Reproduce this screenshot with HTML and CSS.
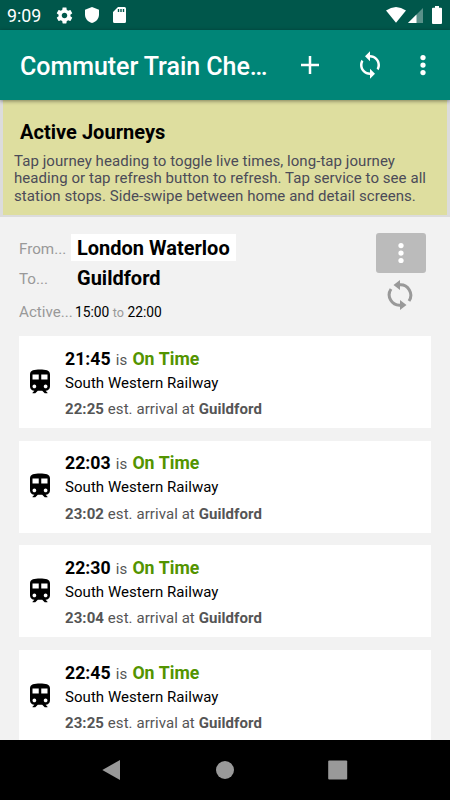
FILE: index.html
```html
<!DOCTYPE html>
<html lang="en">
<head>
<meta charset="utf-8">
<title>Commuter Train Checker</title>
<link rel="stylesheet" href="styles.css">
</head>
<body>
<svg class="defs" width="0" height="0">
  <symbol id="sync" viewBox="0 0 24 24"><path d="M12 4V1L8 5l4 4V6c3.31 0 6 2.69 6 6 0 1.01-.25 1.97-.7 2.8l1.46 1.46C19.54 15.03 20 13.57 20 12c0-4.42-3.58-8-8-8zm0 14c-3.31 0-6-2.69-6-6 0-1.01.25-1.97.7-2.8L5.24 7.74C4.46 8.97 4 10.43 4 12c0 4.42 3.58 8 8 8v3l4-4-4-4v3z"/></symbol>
  <symbol id="more" viewBox="0 0 24 24"><circle cx="12" cy="6" r="2.1"/><circle cx="12" cy="12" r="2.1"/><circle cx="12" cy="18" r="2.1"/></symbol>
  <symbol id="train" viewBox="0 0 24 24"><path d="M12 2c-4.42 0-8 .5-8 4v9.5C4 17.43 5.57 19 7.5 19L6 20.5v.5h2.23l2-2h3.54l2 2H18v-.5L16.5 19c1.93 0 3.5-1.57 3.5-3.5V6c0-3.5-3.58-4-8-4zM7.5 17c-.83 0-1.5-.67-1.5-1.5S6.67 14 7.5 14s1.5.67 1.5 1.5S8.33 17 7.5 17zm3.5-7H6V6h5v4zm2 0V6h5v4h-5zm3.5 7c-.83 0-1.5-.67-1.5-1.5s.67-1.5 1.5-1.5 1.5.67 1.5 1.5-.67 1.5-1.5 1.5z"/></symbol>
</svg>
<div class="screen">
  <div class="status">
    <span class="clock">9:09</span>
    <svg class="gear" width="19" height="19" viewBox="0 0 24 24"><path d="M19.43 12.98c.04-.32.07-.64.07-.98s-.03-.66-.07-.98l2.11-1.65c.19-.15.24-.42.12-.64l-2-3.46c-.12-.22-.39-.3-.61-.22l-2.49 1c-.52-.4-1.08-.73-1.69-.98l-.38-2.65C14.46 2.18 14.25 2 14 2h-4c-.25 0-.46.18-.49.42l-.38 2.65c-.61.25-1.17.59-1.69.98l-2.49-1c-.23-.09-.49 0-.61.22l-2 3.46c-.13.22-.07.49.12.64l2.11 1.65c-.04.32-.07.65-.07.98s.03.66.07.98l-2.11 1.65c-.19.15-.24.42-.12.64l2 3.46c.12.22.39.3.61.22l2.49-1c.52.4 1.08.73 1.69.98l.38 2.65c.03.24.24.42.49.42h4c.25 0 .46-.18.49-.42l.38-2.65c.61-.25 1.17-.59 1.69-.98l2.49 1c.23.09.49 0 .61-.22l2-3.46c.12-.22.07-.49-.12-.64l-2.11-1.65zM12 15.5c-1.93 0-3.5-1.57-3.5-3.5s1.57-3.5 3.5-3.5 3.5 1.57 3.5 3.5-1.57 3.5-3.5 3.5z"/></svg>
    <svg class="shield" width="14" height="16" viewBox="0 0 14 16"><path d="M7 0L0 2.700V7.500C0 11.500 3 15 7 16C11 15 14 11.500 14 7.500V2.700Z"/></svg>
    <svg class="sd" width="13" height="16" viewBox="0 0 13 16"><path fill-rule="evenodd" d="M5 0H11.500Q13 0 13 1.500V14.500Q13 16 11.500 16H1.500Q0 16 0 14.500V5ZM4.800 2V5H6.200V2ZM7.300 2V5H8.700V2ZM9.800 2V5H11.200V2Z"/></svg>
    <svg class="wifi" width="20" height="16" viewBox="0 0 20 16"><path d="M0 3.600Q10 -3.600 20 3.600L10 15.800Z"/></svg>
    <svg class="signal" width="15" height="15" viewBox="0 0 15 15"><path opacity=".35" d="M15 0V15H0Z"/><path d="M8.500 6.500V15H0Z"/></svg>
    <svg class="battery" width="10" height="18" viewBox="0 0 10 18"><path d="M3 0H7V1.700H9Q10 1.700 10 2.700V17Q10 18 9 18H1Q0 18 0 17V2.700Q0 1.700 1 1.700H3Z"/></svg>
  </div>
  <header class="bar">
    <h1>Commuter Train Che…</h1>
    <svg class="action" viewBox="0 0 24 24"><path d="M19.200 13h-6.200v6.200h-2V13H4.800v-2H11V4.800h2V11h6.200z"/></svg>
    <svg class="action"><use href="#sync"/></svg>
    <svg class="overflow"><use href="#more"/></svg>
  </header>
  <section class="notice">
    <h2>Active Journeys</h2>
    <p>Tap journey heading to toggle live times, long-tap journey<br>heading or tap refresh button to refresh. Tap service to see all<br>station stops. Side-swipe between home and detail screens.</p>
  </section>
  <section class="journey">
    <div class="route">
      <div class="line"><span class="label">From...</span><b class="station selected">London Waterloo</b></div>
      <div class="line"><span class="label">To...</span><b class="station">Guildford</b></div>
      <div class="line times"><span class="label">Active...</span><span class="period">15:00 <small>to</small> 22:00</span></div>
    </div>
    <div class="controls">
      <div class="menu"><svg><use href="#more"/></svg></div>
      <svg class="refresh" viewBox="0 0 26 30"><g fill="none" stroke="#999" stroke-width="3"><path d="M4 9A10.500 10.500 0 0 0 13.500 25.300"/><path d="M12.500 4.700A10.500 10.500 0 0 1 22 21"/></g><path fill="#999" d="M13 0V10L6.500 5ZM13 20V30L19.500 25Z"/></svg>
    </div>
  </section>
  <main class="services">
    <article class="card"><svg class="train"><use href="#train"/></svg><div><div class="due"><b>21:45</b> is <b class="ok">On Time</b></div><div class="operator">South Western Railway</div><div class="arrival"><b>22:25</b> est. arrival at <b>Guildford</b></div></div></article>
    <article class="card"><svg class="train"><use href="#train"/></svg><div><div class="due"><b>22:03</b> is <b class="ok">On Time</b></div><div class="operator">South Western Railway</div><div class="arrival"><b>23:02</b> est. arrival at <b>Guildford</b></div></div></article>
    <article class="card"><svg class="train"><use href="#train"/></svg><div><div class="due"><b>22:30</b> is <b class="ok">On Time</b></div><div class="operator">South Western Railway</div><div class="arrival"><b>23:04</b> est. arrival at <b>Guildford</b></div></div></article>
    <article class="card"><svg class="train"><use href="#train"/></svg><div><div class="due"><b>22:45</b> is <b class="ok">On Time</b></div><div class="operator">South Western Railway</div><div class="arrival"><b>23:25</b> est. arrival at <b>Guildford</b></div></div></article>
  </main>
  <nav class="nav">
    <svg viewBox="0 0 20 20"><path d="M.300 10L18 0V20Z"/></svg>
    <svg viewBox="0 0 20 20"><circle cx="10" cy="10" r="9"/></svg>
    <svg viewBox="0 0 20 20"><rect x=".200" y=".500" width="19" height="19" rx="1"/></svg>
  </nav>
</div>
</body>
</html>
```
FILE: styles.css
```css
* { box-sizing: border-box; }
body { margin: 0; font-family: Roboto, sans-serif; background: #f2f2f2; }
h1, h2, p { margin: 0; }
svg { display: block; flex: none; }
.defs { position: absolute; }
.screen { width: 450px; height: 800px; display: flex; flex-direction: column; overflow: hidden; }
.status { height: 30px; flex: none; display: flex; align-items: center; background: #00574b; color: #fff; fill: #fff; padding-right: 8px; }
.clock { width: 47px; margin-left: 7px; font-size: 17.800px; font-weight: 400; line-height: 30px; padding-top: 1px; }
.gear { margin-left: 1px; }
.shield { margin-left: 11px; }
.sd { margin-left: 14px; }
.wifi { margin-left: auto; }
.signal { margin-left: 2px; }
.battery { margin-left: 9px; }
.bar { height: 70px; flex: none; display: flex; align-items: center; background: #008577; color: #fff; fill: #fff; padding: 0 12px 0 20px; box-shadow: 0 1px 4px rgba(0,0,0,.45); position: relative; }
.bar h1 { width: 275px; font-size: 25px; font-weight: 500; line-height: 70px; white-space: nowrap; padding-top: 3px; letter-spacing: -.04px; }
.action { width: 30px; height: 30px; margin-right: 30px; }
.overflow { width: 30px; height: 30px; margin-left: -7.500px; }
.notice { height: 117px; flex: none; border: 3px solid #dcdcdc; border-top-width: 0; border-bottom-width: 2px; background: #dede9f; padding: 20px 0 0 11px; color: #4b4b58; }
.notice h2 { font-size: 20px; line-height: 24px; color: #000; padding-left: 6px; letter-spacing: .03px; }
.notice p { font-size: 15px; line-height: 17.600px; margin-top: 8.500px; white-space: nowrap; letter-spacing: .06px; }
.journey { height: 119px; flex: none; display: flex; justify-content: space-between; padding: 16px 24px 0 19px; }
.route { padding-top: 1px; }
.line { height: 28px; display: flex; align-items: center; }
.line + .line { margin-top: 2px; }
.line.times { margin-top: 5px; }
.label { width: 52px; font-size: 15.200px; color: #999; padding-top: 1px; }
.station { font-size: 20px; line-height: 26px; padding: 1px 6px 0; margin-top: -1px; white-space: nowrap; }
.selected { background: #fff; }
.times .label { width: 56px; }
.period { font-size: 13.800px; white-space: nowrap; padding-top: 1px; }
.period small { font-size: 12.600px; color: #999; }
.menu { width: 50px; height: 40px; border-radius: 3px; background: #bbb; display: flex; align-items: center; justify-content: center; fill: #fff; }
.menu svg { width: 30px; height: 30px; }
.refresh { width: 26px; height: 30px; margin: 7px 0 0 11px; }
.services { flex: 1; min-height: 0; overflow: hidden; display: flex; flex-direction: column; gap: 12.670px; padding: 0 19px; }
.card { height: 92px; flex: none; display: flex; background: #fff; padding: 10px 0 0 6px; }
.train { width: 30px; height: 30px; margin: 20.800px 10px 0 0; fill: #000; }
.due { font-size: 15px; line-height: 25px; color: #555; word-spacing: 1.500px; padding-top: .600px; margin-bottom: -.600px; }
.due b { font-size: 17.700px; color: #000; }
.due .ok { color: #539400; word-spacing: .300px; }
.operator { font-size: 15px; line-height: 22px; margin-top: -1px; letter-spacing: .05px; }
.arrival { font-size: 15px; line-height: 22px; margin-top: 4.500px; color: #555; letter-spacing: .07px; }
.nav { height: 60px; flex: none; background: #000; fill: #999; display: flex; align-items: center; justify-content: space-between; padding: 0 102px; }
.nav svg { width: 20px; height: 20px; }
```
